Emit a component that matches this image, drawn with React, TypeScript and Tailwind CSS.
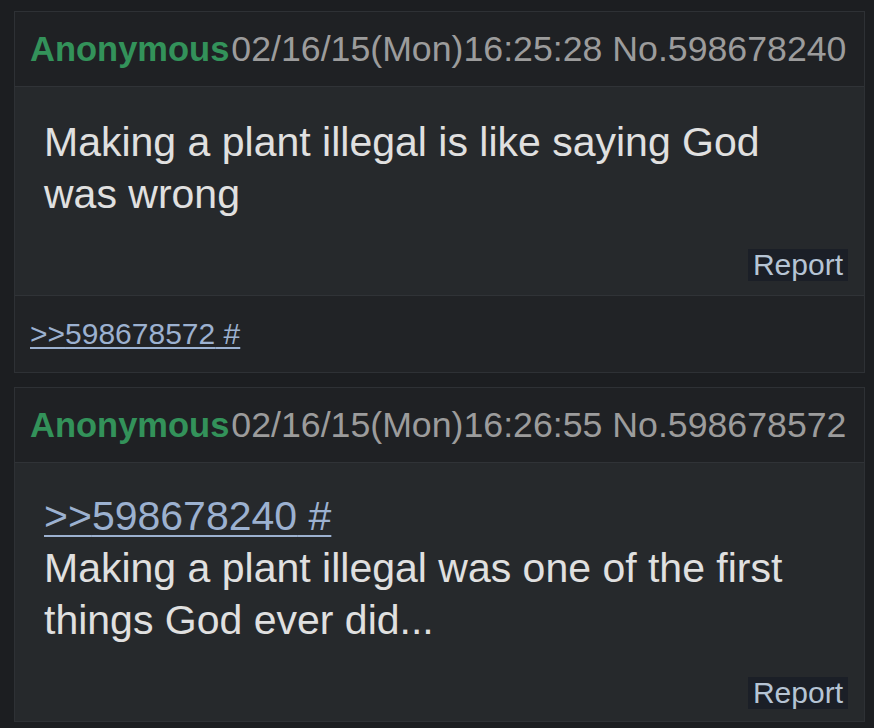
const posts = [
  {
    id: "598678240",
    date: "02/16/15(Mon)16:25:28",
    quote: null as string | null,
    lines: "Making a plant illegal is like saying God was wrong",
    replies: ["598678572"],
  },
  {
    id: "598678572",
    date: "02/16/15(Mon)16:26:55",
    quote: "598678240" as string | null,
    lines: "Making a plant illegal was one of the first things God ever did...",
    replies: [] as string[],
  },
];

const Post = ({ post }: { post: (typeof posts)[number] }) => {
  const hasReplies = post.replies.length > 0;
  return (
    <div className="border border-[#2e3135] bg-[#26292c]">
      <div className="flex h-[74px] items-center bg-[#1f2124] px-[15px] leading-[40px] whitespace-nowrap">
        <span className="text-[34.5px] font-bold text-[#33925a]">Anonymous</span>
        <span className="ml-[2px] text-[35.7px] text-[#9c9c9c]">
          {post.date} No.{post.id}
        </span>
      </div>
      <div className="border-t border-[#303337] flex flex-col px-[29px] pr-[16px]">
        <div
          className={
            post.quote
              ? "pt-[27px] text-[41px] leading-[52px] text-[#e0e0e0] max-w-[770px]"
              : "pt-[29px] text-[41px] leading-[52px] text-[#e0e0e0] max-w-[770px]"
          }
        >
          {post.quote && (
            <a className="block w-fit text-[#9cb1d0] underline decoration-2 underline-offset-[5px]">
              &gt;&gt;{post.quote} #
            </a>
          )}
          <p>{post.lines}</p>
        </div>
        <div
          className={
            post.quote ? "mt-[31px] mb-[12px] flex justify-end" : "mt-[29px] mb-[14px] flex justify-end"
          }
        >
          <span className="h-[32px] bg-[#1b1f27] px-[5px] text-[30px] leading-[32px] text-[#b6c4d4]">
            Report
          </span>
        </div>
      </div>
      {hasReplies && (
        <div className="flex h-[77px] items-center border-t border-[#303337] bg-[#212326] px-[15px]">
          {post.replies.map((r) => (
            <a
              key={r}
              className="text-[30px] leading-[36px] text-[#9cb1d0] underline decoration-2 underline-offset-[3px]"
            >
              &gt;&gt;{r} #
            </a>
          ))}
        </div>
      )}
    </div>
  );
};

export default function App() {
  return (
    <div
      className="h-[728px] overflow-hidden bg-[#1c1e21] pl-[14px] pr-[9px] pt-[11px]"
      style={{ fontFamily: '"Liberation Sans", Arial, sans-serif' }}
    >
      <div className="flex flex-col gap-[14px]">
        {posts.map((p) => (
          <Post key={p.id} post={p} />
        ))}
      </div>
    </div>
  );
}
